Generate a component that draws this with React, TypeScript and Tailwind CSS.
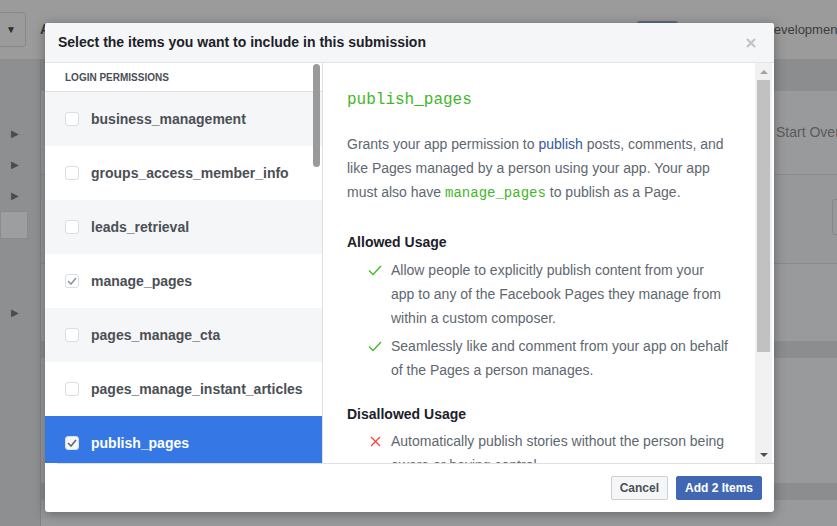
import React from "react";

const permissions = [
  { name: "business_management", checked: false },
  { name: "groups_access_member_info", checked: false },
  { name: "leads_retrieval", checked: false },
  { name: "manage_pages", checked: true },
  { name: "pages_manage_cta", checked: false },
  { name: "pages_manage_instant_articles", checked: false },
  { name: "publish_pages", checked: true, active: true },
];

const CheckIcon = () => (
  <svg width="14" height="11" viewBox="0 0 14 11" fill="none">
    <path d="M1 5.5 L5 9.5 L13 1" stroke="#42b72a" strokeWidth="1.3" />
  </svg>
);

const CrossIcon = () => (
  <svg width="11" height="11" viewBox="0 0 11 11" fill="none">
    <path d="M1 1 L10 10 M10 1 L1 10" stroke="#fa3e3e" strokeWidth="1.3" />
  </svg>
);

const Box: React.FC<{ checked: boolean; active?: boolean }> = ({ checked, active }) => (
  <span
    className={
      "flex h-[14px] w-[14px] shrink-0 items-center justify-center rounded-[3px] border " +
      (active ? "border-[#dadde1] bg-[#f5f6f7]" : "border-[#dadde1] bg-white")
    }
  >
    {checked && (
      <svg width="10" height="8" viewBox="0 0 10 8" fill="none">
        <path
          d="M1 4 L4 7 L9 1"
          stroke={active ? "#606770" : "#90949c"}
          strokeWidth="1.6"
        />
      </svg>
    )}
  </span>
);

const Caret = () => <span className="text-[10px] leading-none text-[#4a4b4d]">&#9654;</span>;

const UsageItem: React.FC<{ ok: boolean; children: React.ReactNode }> = ({ ok, children }) => (
  <li className="flex pl-[21px]">
    <span className="mr-[9px] flex h-[24px] w-[14px] shrink-0 items-center justify-center">
      {ok ? <CheckIcon /> : <CrossIcon />}
    </span>
    <span>{children}</span>
  </li>
);

const App: React.FC = () => {
  return (
    <div className="relative h-[526px] w-[837px] overflow-hidden bg-[#999a9b] font-['Liberation_Sans',Arial,sans-serif] text-[14px]">
      {/* page behind the overlay */}
      <div className="flex h-[60px] items-center border-b border-[#8d8e8f] bg-[#9b9b9b]">
        <div className="ml-[-4px] flex h-[35px] w-[30px] shrink-0 items-center rounded-[3px] border border-[#888] pl-[9px]">
          <span className="text-[10px] text-[#2d2d2d]">&#9660;</span>
        </div>
        <span className="ml-[14px] font-bold text-[#3a3a3a]">App Review</span>
        <div className="ml-auto flex h-full shrink-0 items-center">
          <span className="mb-auto mt-[21px] h-[24px] w-[41px] shrink-0 rounded-[3px] bg-[#5f6a80]" />
          <span className="ml-[86px] mr-[-4px] whitespace-nowrap text-[13px] text-[#3b3b3b]">Development</span>
        </div>
      </div>
      <div className="flex h-[466px]">
        <div className="flex w-[41px] shrink-0 flex-col border-r border-[#828385] bg-[#8e8f91]">
          <div className="mt-[69px] flex flex-col gap-[21px] pl-[11px]">
            <Caret />
            <Caret />
            <Caret />
          </div>
          <div className="mt-[10px] h-[28px] w-[28px] border border-[#8a8b8d] bg-[#9d9e9f]" />
          <div className="mt-[62px] pl-[11px]">
            <Caret />
          </div>
        </div>
        <div className="flex min-w-0 flex-1 flex-col bg-[#999a9b]">
          <div className="h-[31px] shrink-0 bg-[#8c8d8e]" />
          <div className="flex h-[84px] shrink-0 items-center border-b border-[#8a8b8c] pl-[735px]">
            <span className="whitespace-nowrap text-[#5b5b5b]">Start Over</span>
          </div>
          <div className="flex h-[89px] shrink-0 items-start border-b border-[#8a8b8c] bg-[#979899] pl-[791px] pt-[24px]">
            <span className="h-[36px] w-[20px] shrink-0 rounded-l-[3px] border border-[#858687]" />
          </div>
          <div className="h-[77px] shrink-0" />
          <div className="h-[17px] shrink-0 bg-[#8c8d8e]" />
          <div className="h-[125px] shrink-0" />
          <div className="h-[17px] shrink-0 bg-[#8c8d8e]" />
        </div>
      </div>

      {/* dialog */}
      <div className="absolute left-[45px] top-[23px] flex h-[489px] w-[729px] flex-col overflow-hidden rounded-[3px] bg-white shadow-[0_2px_12px_rgba(0,0,0,0.35)]">
        <div className="flex h-[40px] shrink-0 items-center border-b border-[#e5e5e5] bg-[#f5f6f7] px-3">
          <span className="pl-px font-bold text-[#1d2129]">Select the items you want to include in this submission</span>
          <svg className="ml-auto mr-[6px]" width="10" height="10" viewBox="0 0 10 10" fill="none">
            <path d="M1 1 L9 9 M9 1 L1 9" stroke="#bec2c9" strokeWidth="2" />
          </svg>
        </div>

        <div className="flex h-[400px] shrink-0">
          {/* permission list */}
          <div className="relative w-[278px] shrink-0 overflow-hidden border-r border-[#dddfe2]">
            <div className="flex h-[29px] items-center border-b border-[#dddfe2] pl-[20px] text-[10px] font-bold text-[#4b4f56]">
              LOGIN PERMISSIONS
            </div>
            {permissions.map((p, i) => (
              <div
                key={p.name}
                className={
                  "flex h-[54px] items-center gap-3 pl-[20px] font-bold " +
                  (p.active
                    ? "bg-[#3578e5] text-white"
                    : i % 2 === 0
                    ? "bg-[#f5f6f7] text-[#4b4f56]"
                    : "bg-white text-[#4b4f56]")
                }
              >
                <Box checked={p.checked} active={p.active} />
                <span>{p.name}</span>
              </div>
            ))}
            <div className="absolute right-[2px] top-[1px] h-[103px] w-[7px] rounded-full bg-[#9a9a9a]" />
          </div>

          {/* details */}
          <div className="flex flex-1">
            <div className="w-[432px] overflow-hidden px-6 pt-6 leading-[24px] text-[#606770]">
              <div className="font-['Liberation_Mono','Courier_New',monospace] text-[16px] leading-[26px] text-[#42b72a]">
                publish_pages
              </div>
              <p className="mt-[19px]">
                Grants your app permission to <span className="text-[#365899]">publish</span> posts, comments, and
                like Pages managed by a person using your app. Your app must also have{" "}
                <code className="font-['Liberation_Mono','Courier_New',monospace] text-[14px] text-[#42b72a]">
                  manage_pages
                </code>{" "}
                to publish as a Page.
              </p>
              <div className="mt-[25px] font-bold text-[#1d2129]">Allowed Usage</div>
              <ul className="mt-1 flex flex-col gap-1">
                <UsageItem ok>
                  Allow people to explicitly publish content from your app to any of the Facebook Pages they manage
                  from within a custom composer.
                </UsageItem>
                <UsageItem ok>
                  Seamlessly like and comment from your app on behalf of the Pages a person manages.
                </UsageItem>
              </ul>
              <div className="mt-5 font-bold text-[#1d2129]">Disallowed Usage</div>
              <ul className="mt-[3px] flex flex-col gap-1">
                <UsageItem ok={false}>
                  Automatically publish stories without the person being aware or having control.
                </UsageItem>
              </ul>
            </div>
            <div className="flex w-[17px] shrink-0 flex-col items-center bg-[#f1f1f1]">
              <div className="flex h-[17px] items-center justify-center">
                <span className="h-0 w-0 border-x-[4px] border-b-[4px] border-x-transparent border-b-[#a3a3a3]" />
              </div>
              <div className="h-[272px] w-[13px] bg-[#c1c1c1]" />
              <div className="mt-auto flex h-[17px] items-center justify-center">
                <span className="h-0 w-0 border-x-[4px] border-t-[4px] border-x-transparent border-t-[#505050]" />
              </div>
            </div>
            <div className="w-[2px] shrink-0 bg-white" />
          </div>
        </div>

        <div className="ml-3 h-px shrink-0 bg-[#dddfe2]" />
        <div className="flex flex-1 items-start justify-end gap-2 px-3 pt-3">
          <button className="h-[24px] rounded-[2px] border border-[#ccd0d5] bg-[#f5f6f7] px-2 text-[12px] font-bold text-[#4b4f56]">
            Cancel
          </button>
          <button className="h-[24px] rounded-[2px] border border-[#4267b2] bg-[#4267b2] px-2 text-[12px] font-bold text-white">
            Add 2 Items
          </button>
        </div>
      </div>
    </div>
  );
};

export default App;
